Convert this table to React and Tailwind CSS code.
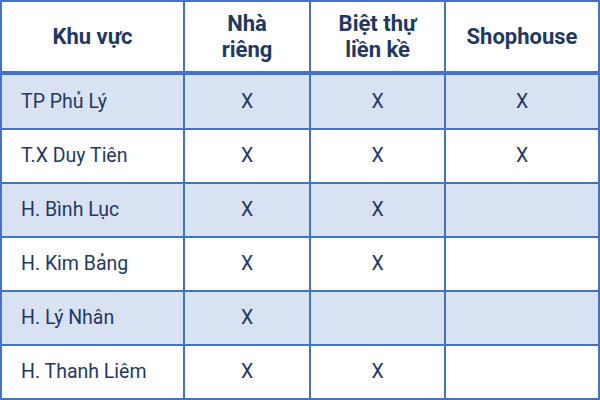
const rows = [
  ["TP Phủ Lý", true, true, true],
  ["T.X Duy Tiên", true, true, true],
  ["H. Bình Lục", true, true, false],
  ["H. Kim Bảng", true, true, false],
  ["H. Lý Nhân", true, false, false],
  ["H. Thanh Liêm", true, true, false],
];

export default function App() {
  return (
    <div className="w-[600px] h-[400px] bg-white font-['Roboto',sans-serif] text-[#1f3864]">
      <table className="w-[600px] h-[400px] border-collapse table-fixed">
        <colgroup>
          <col className="w-[183px]" />
          <col className="w-[126px]" />
          <col className="w-[135px]" />
          <col />
        </colgroup>
        <thead>
          <tr className="h-[72px]">
            <th className="border-2 border-b-[4px] border-[#4472c4] text-[22px] font-bold leading-[26px] text-center">Khu vực</th>
            <th className="border-2 border-b-[4px] border-[#4472c4] text-[22px] font-bold leading-[26px] text-center">Nhà<br />riêng</th>
            <th className="border-2 border-b-[4px] border-[#4472c4] text-[22px] font-bold leading-[26px] text-center">Biệt thự<br />liền kề</th>
            <th className="border-2 border-b-[4px] border-[#4472c4] text-[22px] font-bold leading-[26px] text-center">Shophouse</th>
          </tr>
        </thead>
        <tbody>
          {rows.map((r, i) => (
            <tr key={i} className={i % 2 === 0 ? "bg-[#d9e2f3]" : "bg-white"}>
              <td className="border-2 border-[#4472c4] pl-[19px] text-[19.5px]">{r[0]}</td>
              {r.slice(1).map((v, j) => (
                <td key={j} className="border-2 border-[#4472c4] text-center text-[19.5px]">{v ? "X" : ""}</td>
              ))}
            </tr>
          ))}
        </tbody>
      </table>
    </div>
  );
}
